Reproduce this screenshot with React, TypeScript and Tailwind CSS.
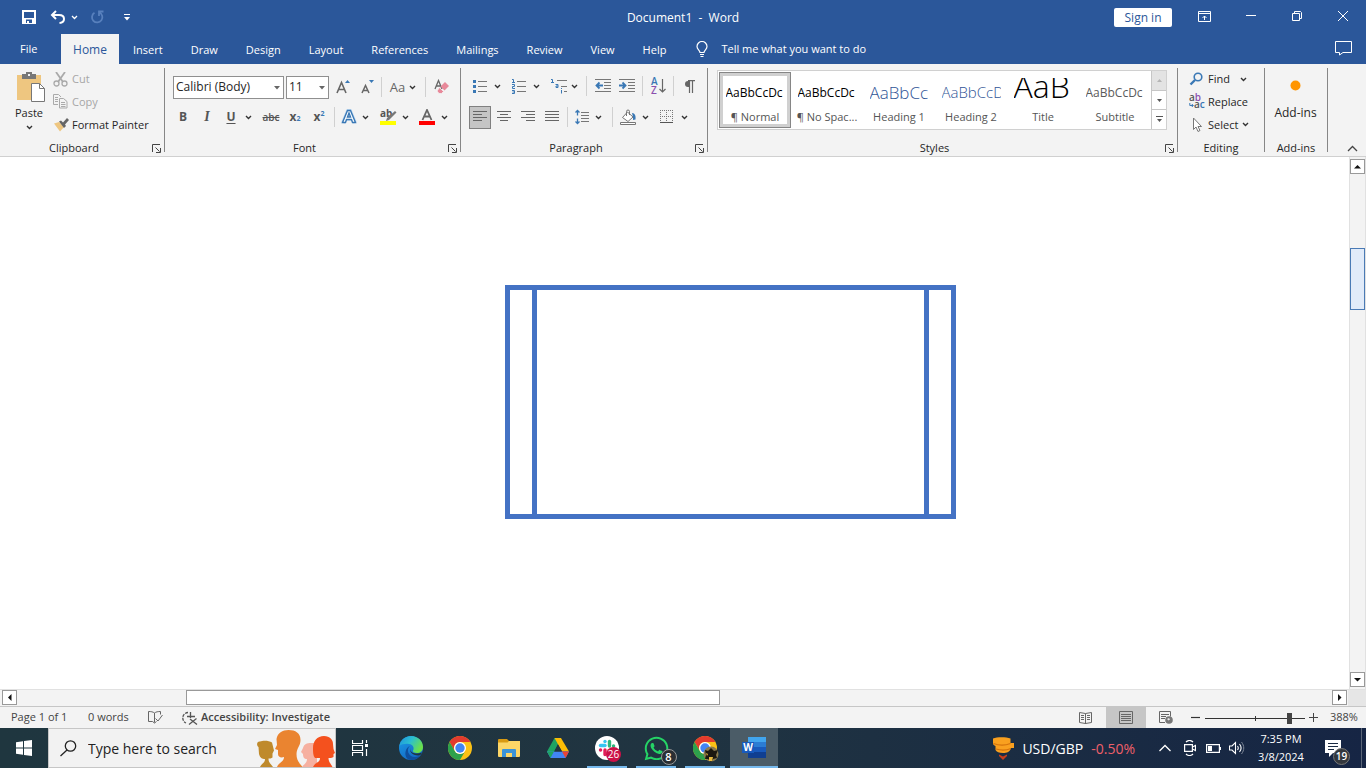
import type { ReactNode } from 'react';
import { FaWhatsapp } from 'react-icons/fa';

const tabs = ['Insert', 'Draw', 'Design', 'Layout', 'References', 'Mailings', 'Review', 'View', 'Help'];

const styleItems = [
  { label: '¶ Normal', sample: 'AaBbCcDc', look: 'text-[12px] leading-6 text-black pt-[3px]', active: true },
  { label: '¶ No Spac...', sample: 'AaBbCcDc', look: 'text-[12px] leading-6 text-black pt-[3px]' },
  { label: 'Heading 1', sample: 'AaBbCc', look: 'text-[17px] leading-6 font-light text-[#2f5496] pt-[3px]' },
  { label: 'Heading 2', sample: 'AaBbCcD', look: 'text-[15px] leading-6 font-light text-[#2f5496] pt-[2px]' },
  { label: 'Title', sample: 'AaB', look: 'text-[32px] leading-4 font-light text-black' },
  { label: 'Subtitle', sample: 'AaBbCcDc', look: 'text-[12px] leading-6 text-[#5a5a5a] pt-[3px]' },
];

interface IconProps {
  w?: number;
  h?: number;
  children: ReactNode;
}

function Icon({ w = 16, h = 16, children }: IconProps) {
  return (
    <svg width={w} height={h} viewBox={`0 0 ${w} ${h}`} fill="none" className="shrink-0" aria-hidden="true">
      {children}
    </svg>
  );
}

function Chevron() {
  return (
    <Icon w={7} h={5}>
      <path d="M1 1l2.5 2.5L6 1" stroke="#333" strokeWidth="1.4" />
    </Icon>
  );
}

function Tool({ label, className = 'w-6', children }: { label: string; className?: string; children: ReactNode }) {
  return (
    <button type="button" aria-label={label} className={`flex h-6 shrink-0 items-center justify-center ${className}`}>
      {children}
    </button>
  );
}

function More({ label }: { label: string }) {
  return (
    <Tool label={`${label} options`} className="w-[10px]">
      <Chevron />
    </Tool>
  );
}

function Sep({ className = 'mx-1' }: { className?: string }) {
  return <span className={`h-5 w-px shrink-0 bg-[#d0d0d0] ${className}`} />;
}

interface GroupProps {
  title: string;
  className: string;
  launcher?: boolean;
  children: ReactNode;
}

function Group({ title, className, launcher = true, children }: GroupProps) {
  return (
    <section aria-label={title} className={`flex shrink-0 flex-col border-r border-[#868686] ${className}`}>
      <div className="flex-1">{children}</div>
      <div className="flex h-2 items-center">
        <span className="flex-1 whitespace-nowrap text-center">{title}</span>
        {launcher && (
          <button type="button" aria-label={`${title} settings`} className="flex w-4 shrink-0 justify-center">
            <Icon w={9} h={9}>
              <path d="M.5 8V.5H8M3.500 3.500l4 4M8.500 4v4.500H4" stroke="#444" />
            </Icon>
          </button>
        )}
      </div>
    </section>
  );
}

function Combo({ label, value, className }: { label: string; value: string; className: string }) {
  return (
    <span className={`relative h-[23px] ${className}`}>
      <select
        aria-label={label}
        defaultValue={value}
        className="h-full w-full appearance-none border border-[#8f8f8f] bg-white px-[2px] text-[12px] leading-4 text-[#262626]"
      >
        <option>{value}</option>
      </select>
      <span className="pointer-events-none absolute right-1 top-[10px]">
        <Icon w={6} h={4}>
          <path d="M0 0h6L3 3.500z" fill="#666" />
        </Icon>
      </span>
    </span>
  );
}

function TitleBar() {
  return (
    <header className="flex h-[34px] items-center bg-[#2b579a] text-[12px] text-white">
      <div className="flex flex-1 items-center">
        <button type="button" aria-label="Save" className="ml-[22px]">
          <Icon w={14} h={14}>
            <path d="M1 1h12v12H1z" stroke="#fff" strokeWidth="2" />
            <path d="M1 8h12v5H1z" fill="#fff" />
            <path d="M4 9.500h6V13H7v-2H5v2H4z" fill="#2b579a" />
          </Icon>
        </button>
        <button type="button" aria-label="Undo" className="ml-[14px]">
          <Icon w={16} h={14}>
            <path d="M6 1L2 5l4 4M2.500 5H9c3.500 0 5 1.800 5 4 0 2.400-1.500 3.700-4.500 4" stroke="#fff" strokeWidth="2" />
          </Icon>
        </button>
        <button type="button" aria-label="Undo options" className="ml-[5px]">
          <Icon w={7} h={5}>
            <path d="M1 1l2.500 2.500L6 1" stroke="#fff" strokeWidth="1.300" />
          </Icon>
        </button>
        <button type="button" aria-label="Repeat" className="ml-[12px]">
          <Icon w={14} h={14}>
            <path d="M13.500 1.500H9V6M9.300 2.500A5.200 5.200 0 1 1 4.500 2.800" stroke="#5880bd" strokeWidth="1.800" />
          </Icon>
        </button>
        <button type="button" aria-label="Customize quick access toolbar" className="ml-[20px]">
          <Icon w={6} h={7}>
            <path d="M0 .5h6" stroke="#fff" />
            <path d="M0 3h6L3 6.500z" fill="#fff" />
          </Icon>
        </button>
      </div>
      <h1 className="whitespace-pre pt-px text-[12px]">Document1  -  Word</h1>
      <div className="flex flex-1 items-center justify-end">
        <button type="button" className="h-[19px] w-[58px] rounded-xs bg-white pt-px text-[12px] leading-4 text-[#2b579a]">
          Sign in
        </button>
        <button type="button" aria-label="Ribbon display options" className="ml-[26px]">
          <Icon w={13} h={13}>
            <path d="M.5.5h12v10H.5zM.5 2.500h12M6.500 9V5M4.500 7l2-2 2 2" stroke="#fff" />
          </Icon>
        </button>
        <button type="button" aria-label="Minimize" className="ml-[35px]">
          <Icon w={10} h={10}>
            <path d="M0 3.500h10" stroke="#fff" />
          </Icon>
        </button>
        <button type="button" aria-label="Restore" className="ml-[36px]">
          <Icon w={10} h={13}>
            <path d="M.5 2.500h7v7h-7zM2.500 2V.5h6l1 1v6H8" stroke="#fff" />
          </Icon>
        </button>
        <button type="button" aria-label="Close" className="ml-[36px] mr-[18px]">
          <Icon w={10} h={13}>
            <path d="M0 0l10 10M10 0L0 10" stroke="#fff" />
          </Icon>
        </button>
      </div>
    </header>
  );
}

function TabBar() {
  return (
    <nav className="flex h-[30px] items-center bg-[#2b579a] pr-[14px] text-[11px] text-white">
      <button type="button" className="ml-[20px] w-[41px] text-left">File</button>
      <button type="button" className="h-[30px] w-[58px] bg-[#f3f3f3] pt-px text-[12px] text-[#2b579a]">Home</button>
      <div className="flex items-center gap-7 pl-[14px] pt-[2px]">
        {tabs.map((tab) => (
          <button key={tab} type="button">{tab}</button>
        ))}
      </div>
      <button type="button" className="ml-[30px] flex items-center gap-[13px]">
        <Icon w={12} h={17}>
          <path d="M4 11.500C4 9.500 1 8.500 1 5.500a5 5 0 0 1 10 0c0 3-3 4-3 6zM4 13.500h4M4.500 15.500h3" stroke="#fff" strokeWidth="1.200" />
        </Icon>
        Tell me what you want to do
      </button>
      <button type="button" aria-label="Comments" className="ml-auto">
        <Icon w={17} h={17}>
          <path d="M.5.5h16v11H8L4.500 14v-2.500h-4z" stroke="#fff" />
        </Icon>
      </button>
    </nav>
  );
}

function ClipboardGroup() {
  return (
    <Group title="Clipboard" className="w-[165px]">
      <div className="flex pl-[14px]">
        <button type="button" className="flex w-[30px] flex-col items-center pt-[4px]">
          <span className="pl-[4px]">
            <Icon w={28} h={31}>
              <path d="M0 3h24v25H0z" fill="#eec680" />
              <path d="M5 2h4V0h6v2h4v5H5z" fill="#777" />
              <path d="M11 2h2v2h-2z" fill="#f3f3f3" />
              <path d="M14.500 11.500h8l5 5v13h-13z" fill="#fff" stroke="#777" />
              <path d="M22.500 11.500v5h5" stroke="#777" />
            </Icon>
          </span>
          <span className="pb-[4px] pt-[2px] leading-4">Paste</span>
          <Chevron />
        </button>
        <div className="flex flex-col pl-[9px]">
          <button type="button" className="flex h-[22px] items-center gap-[4px] text-[#a6a6a6]">
            <Icon w={15} h={15}>
              <path d="M3 0l7 10M12 0L5 10" stroke="#aaa" strokeWidth="1.800" />
              <circle cx="3.500" cy="11.500" r="2.500" stroke="#aaa" strokeWidth="1.300" />
              <circle cx="11.500" cy="11.500" r="2.500" stroke="#aaa" strokeWidth="1.300" />
            </Icon>
            Cut
          </button>
          <button type="button" className="flex h-[23px] items-center gap-[4px] text-[#a6a6a6]">
            <Icon w={15} h={15}>
              <path d="M5 10.500H.5V.5h5L8 3M2 3.500h3M2 5.500h3M2 7.500h3" stroke="#aaa" />
              <path d="M6.500 4.500h4l3.500 3v6.500H6.500zM8 8.500h4M8 10.500h4.500M8 12.500h4.500" stroke="#aaa" />
            </Icon>
            Copy
          </button>
          <button type="button" className="flex h-[23px] items-center gap-[3px] whitespace-nowrap">
            <Icon w={16} h={14}>
              <path d="M1 5.500l5-1.500 5 5-4 4.500z" fill="#eec680" />
              <path d="M6 3.500l2-1 2 2L14 0l2 2-4 4.500 1 1.500-2 2z" fill="#666" />
            </Icon>
            Format Painter
          </button>
        </div>
      </div>
    </Group>
  );
}

function FontGroup() {
  return (
    <Group title="Font" className="w-[296px]">
      <div className="mt-[7px] flex h-6 items-center pl-[8px]">
        <Combo label="Font" value="Calibri (Body)" className="mr-[2px] w-[111px]" />
        <Combo label="Font size" value="11" className="mr-[2px] w-[43px]" />
        <Tool label="Grow font">
          <Icon w={14} h={16}>
            <path d="M1 14L5.500 3.500 10 14M2.700 10.500h5.600" stroke="#666" strokeWidth="1.600" />
            <path d="M9 4l2.500-3L14 4z" fill="#3a78b5" />
          </Icon>
        </Tool>
        <Tool label="Shrink font">
          <Icon w={14} h={16}>
            <path d="M2 14L5.500 6.500 9 14M3.300 11.500h4.400" stroke="#666" strokeWidth="1.500" />
            <path d="M9 1h5l-2.500 3z" fill="#3a78b5" />
          </Icon>
        </Tool>
        <Sep className="ml-[2px] mr-[3px]" />
        <Tool label="Change case" className="w-[36px] gap-[4px] text-[13px] text-[#666]">
          Aa
          <Chevron />
        </Tool>
        <Sep className="ml-[4px] mr-[4px]" />
        <Tool label="Clear formatting">
          <Icon w={16} h={16}>
            <path d="M1 10L4.500 1.500 8 10M2.500 7h4" stroke="#666" strokeWidth="1.300" />
            <path d="M11 3l4 4-4.500 4.500-4-4z" fill="#e8899a" />
            <path d="M5.500 8.500l4 4-2 2H5l-2-2.500z" fill="#e8899a" stroke="#f3f3f3" strokeWidth=".8" />
          </Icon>
        </Tool>
      </div>
      <div className="mt-[6px] flex h-6 items-center pl-[6px] text-[#555]">
        <Tool label="Bold"><b className="text-[12px]">B</b></Tool>
        <Tool label="Italic"><i className="font-['Liberation_Serif',serif] text-[14px] font-bold">I</i></Tool>
        <Tool label="Underline"><u className="text-[12px] font-bold underline-offset-2">U</u></Tool>
        <More label="Underline" />
        <Tool label="Strikethrough" className="ml-[6px] w-6"><s className="text-[10px] font-semibold">abc</s></Tool>
        <Tool label="Subscript">
          <b className="text-[12px]">x</b><span className="self-end pb-[2px] text-[7px] font-bold text-[#3a78b5]">2</span>
        </Tool>
        <Tool label="Superscript">
          <b className="text-[12px]">x</b><span className="self-start pt-[1px] text-[7px] font-bold text-[#3a78b5]">2</span>
        </Tool>
        <Sep className="ml-[3px] mr-[3px]" />
        <Tool label="Text effects" className="w-[22px]">
          <Icon w={16} h={16}>
            <path d="M2 14L7 2h2l5 12M5 10h6" stroke="#c3dcf3" strokeWidth="4" />
            <path d="M1.500 13.500L6.500 1.500h3l5 12h-3l-1-3h-5l-1 3zM6.500 8h3L8 4z" fill="#fff" stroke="#3a78b5" strokeWidth="1.400" />
          </Icon>
        </Tool>
        <More label="Text effects" />
        <Tool label="Highlight color" className="ml-[6px] w-6">
          <svg width="17" height="16" viewBox="0 0 17 16" className="overflow-visible font-['Open_Sans',sans-serif]" aria-hidden="true">
            <text x="0" y="8" fontSize="10" fontWeight="700" fill="#555">ab</text>
            <path d="M15 2l1.500 1.500L9 11l-3 1 1-3z" fill="#777" />
            <path d="M0 12h16v4H0z" fill="#ff0" />
          </svg>
        </Tool>
        <More label="Highlight color" />
        <Tool label="Font color" className="ml-[5px] w-6">
          <Icon>
            <path d="M3.500 11L8 1l4.500 10M5.200 7.500h5.600" stroke="#666" strokeWidth="1.800" />
            <path d="M0 12h16v4H0z" fill="red" />
          </Icon>
        </Tool>
        <More label="Font color" />
      </div>
    </Group>
  );
}

function ParagraphGroup() {
  return (
    <Group title="Paragraph" className="w-[247px]">
      <div className="mt-[6px] flex h-6 items-center pl-[7px]">
        <Tool label="Bullets">
          <Icon>
            <path d="M6 3.500h9M6 8.500h9M6 13.500h9" stroke="#777" />
            <path d="M1 2h3v3H1zM1 7h3v3H1zM1 12h3v3H1z" fill="#3a78b5" />
          </Icon>
        </Tool>
        <More label="Bullets" />
        <Tool label="Numbering" className="ml-[5px] w-6">
          <Icon>
            <path d="M6 3.500h9M6 8.500h9M6 13.500h9" stroke="#777" />
            <path d="M1 1.500h1.500v3M1 4.500h3M1 6.500h2.500v2H1.500v2H4M1 12.500h2.500v3H1M1.500 14h2" stroke="#3a78b5" />
          </Icon>
        </Tool>
        <More label="Numbering" />
        <Tool label="Multilevel list" className="ml-[8px] w-5">
          <Icon w={17} h={16}>
            <path d="M6 2.500h10M10 8.500h6M13 13.500h3" stroke="#777" />
            <path d="M0 1.500h1.500v3M0 4.500h3M4.500 6.500H7v3H5V8h2M10.500 10v1M10.500 12v3.500" stroke="#3a78b5" />
          </Icon>
        </Tool>
        <More label="Multilevel list" />
        <Sep className="ml-[7px] mr-[4px]" />
        <Tool label="Decrease indent">
          <Icon>
            <path d="M0 1.500h16M9 4.500h7M9 7.500h7M9 10.500h7M0 13.500h16" stroke="#777" />
            <path d="M8 7.500H2M4.500 4.500l-3 3 3 3" stroke="#3a78b5" strokeWidth="1.800" />
          </Icon>
        </Tool>
        <Tool label="Increase indent">
          <Icon>
            <path d="M0 1.500h16M9 4.500h7M9 7.500h7M9 10.500h7M0 13.500h16" stroke="#777" />
            <path d="M0 7.500h6M3.500 4.500l3 3-3 3" stroke="#3a78b5" strokeWidth="1.800" />
          </Icon>
        </Tool>
        <Sep className="ml-[3px] mr-[3px]" />
        <Tool label="Sort">
          <svg width="15" height="18" viewBox="0 0 15 18" className="overflow-visible font-['Open_Sans',sans-serif]" aria-hidden="true">
            <text x="0" y="8" fontSize="10" fontWeight="600" fill="#3a78b5">A</text>
            <text x="0" y="17" fontSize="10" fontWeight="600" fill="#8b4fae">Z</text>
            <path d="M11.500 2v13M8.500 12l3 3 3-3" stroke="#666" fill="none" strokeWidth="1.200" />
          </svg>
        </Tool>
        <Sep className="ml-[3px] mr-[3px]" />
        <Tool label="Show marks">
          <Icon w={11} h={13}>
            <path d="M4 1a3 3 0 0 0 0 6h1V1z" fill="#666" />
            <path d="M4 .6h7M5.500 1v12M8.500 1v12" stroke="#666" strokeWidth="1.200" />
          </Icon>
        </Tool>
      </div>
      <div className="mt-[7px] flex h-6 items-center pl-[8px]">
        <button type="button" aria-label="Align left" className="flex h-[23px] w-[22px] items-center justify-center border border-[#808080] bg-[#c5c5c5]">
          <Icon w={14} h={12}>
            <path d="M0 .5h14M0 3.500h9M0 6.500h14M0 9.500h9" stroke="#666" />
          </Icon>
        </button>
        <Tool label="Center" className="ml-px w-6">
          <Icon w={14} h={12}>
            <path d="M0 .5h14M3 3.500h8M0 6.500h14M3 9.500h8" stroke="#666" />
          </Icon>
        </Tool>
        <Tool label="Align right">
          <Icon w={14} h={12}>
            <path d="M0 .5h14M5 3.500h9M0 6.500h14M5 9.500h9" stroke="#666" />
          </Icon>
        </Tool>
        <Tool label="Justify">
          <Icon w={14} h={12}>
            <path d="M0 .5h14M0 3.500h14M0 6.500h14M0 9.500h14" stroke="#666" />
          </Icon>
        </Tool>
        <Sep className="ml-[3px] mr-[3px]" />
        <Tool label="Line spacing" className="w-[22px]">
          <Icon w={14} h={16}>
            <path d="M6 3.500h8M6 6.500h8M6 9.500h8M6 12.500h8" stroke="#777" />
            <path d="M2.500 1v5.500M2.500 9.500V15M.5 3.500l2-2 2 2M.5 12.500l2 2 2-2" stroke="#3a78b5" strokeWidth="1.300" />
          </Icon>
        </Tool>
        <More label="Line spacing" />
        <Sep className="ml-[9px] mr-[3px]" />
        <Tool label="Shading">
          <Icon>
            <path d="M2.500 8.500L7.500 3l5.500 5-5 4.500z" fill="#fff" stroke="#777" />
            <path d="M6.500 7V2.500a1.500 1.500 0 0 1 3 0V6" stroke="#777" />
            <path d="M12 4c3 0 4 3 3.500 6.500L13 11V8z" fill="#3a78b5" />
            <path d="M.5 13.500h15v2H.5z" fill="#fff" stroke="#777" />
          </Icon>
        </Tool>
        <More label="Shading" />
        <Tool label="Borders" className="ml-[5px] w-6">
          <Icon w={14} h={14}>
            <path d="M.5 0v13M6.500 0v13M12.500 0v13M0 .5h13M0 6.500h13" stroke="#777" strokeDasharray="1 1" />
            <path d="M0 12.500h13" stroke="#555" />
          </Icon>
        </Tool>
        <More label="Borders" />
      </div>
    </Group>
  );
}

function StylesGroup() {
  return (
    <Group title="Styles" className="min-w-[470px] flex-1">
      <div className="ml-[9px] mr-[10px] mt-[2px] flex h-[60px] border border-[#d0d0d0] bg-white">
        <div className="flex flex-1 items-center pl-px">
          {styleItems.map((item) => (
            <button
              key={item.label}
              type="button"
              className={`flex h-[56px] w-[72px] flex-col items-center border pt-[5px] ${
                item.active ? 'border-[#868686] shadow-[inset_0_0_0_3px_#d0d0d0]' : 'border-transparent'
              }`}
            >
              <span className={`flex h-[27px] w-[59px] shrink-0 items-start overflow-hidden ${item.look}`}>
                {item.sample}
              </span>
              <span className="mt-[4px] whitespace-nowrap text-[11px] leading-4 text-[#555]">{item.label}</span>
            </button>
          ))}
        </div>
        <div className="flex w-[15px] flex-col divide-y divide-[#c6c6c6] border-l border-[#c6c6c6]">
          <button type="button" aria-label="Previous styles" className="flex flex-1 items-center justify-center bg-[#e3e3e3]">
            <Icon w={5} h={3}><path d="M0 3h5L2.500 0z" fill="#b5b5b5" /></Icon>
          </button>
          <button type="button" aria-label="Next styles" className="flex flex-1 items-center justify-center">
            <Icon w={5} h={3}><path d="M0 0h5L2.500 3z" fill="#555" /></Icon>
          </button>
          <button type="button" aria-label="All styles" className="flex flex-1 items-center justify-center">
            <Icon w={7} h={7}>
              <path d="M0 .5h7" stroke="#555" />
              <path d="M1 3h5L3.500 6z" fill="#555" />
            </Icon>
          </button>
        </div>
      </div>
    </Group>
  );
}

function EditingGroup() {
  return (
    <Group title="Editing" className="w-[87px]" launcher={false}>
      <div className="flex flex-col pl-[11px]">
        <button type="button" className="flex h-[22px] items-center">
          <Icon w={15} h={14}>
            <circle cx="9" cy="5" r="3.800" stroke="#3a78b5" strokeWidth="1.600" />
            <path d="M6 8l-4.500 4.500" stroke="#3a78b5" strokeWidth="2.400" />
          </Icon>
          <span className="ml-[4px] mr-[10px]">Find</span>
          <Chevron />
        </button>
        <button type="button" className="flex h-[23px] items-center gap-[3px]">
          <svg width="16" height="17" viewBox="0 0 16 17" className="overflow-visible font-['Open_Sans',sans-serif]" aria-hidden="true">
            <text x="0" y="8" fontSize="10" fontWeight="600" fill="#555">a<tspan fill="#8b4fae">b</tspan></text>
            <text x="5" y="15" fontSize="10" fontWeight="600" fill="#555">a<tspan fill="#3a78b5">c</tspan></text>
            <path d="M.8 10v2.500H4M2.800 11l1.500 1.500L2.800 14" stroke="#3a78b5" fill="none" />
          </svg>
          Replace
        </button>
        <button type="button" className="flex h-[23px] items-center">
          <Icon w={16} h={15}>
            <path d="M4.500 1v11.500l2.500-2.500 2 4.500 2-1-2-4h3.500z" fill="#fff" stroke="#777" />
          </Icon>
          <span className="ml-[3px] mr-[4px]">Select</span>
          <Chevron />
        </button>
      </div>
    </Group>
  );
}

function Ribbon() {
  return (
    <div className="flex h-[93px] border-b border-[#d0d0d0] bg-[#f3f3f3] pb-[4px] pt-[4px] text-[11px] leading-4 text-[#262626]">
      <ClipboardGroup />
      <FontGroup />
      <ParagraphGroup />
      <StylesGroup />
      <EditingGroup />
      <Group title="Add-ins" className="w-[63px]" launcher={false}>
        <button type="button" className="flex w-full flex-col items-center pr-px pt-[12px] text-[12px]">
          <Icon w={11} h={11}><circle cx="5.500" cy="5.500" r="5" fill="#ff9500" /></Icon>
          <span className="pt-[14px]">Add-ins</span>
        </button>
      </Group>
      <button type="button" aria-label="Collapse the ribbon" className="w-[38px] self-end pl-[19px]">
        <Icon w={11} h={7}><path d="M1 6l4.500-4.500L10 6" stroke="#444" strokeWidth="1.300" /></Icon>
      </button>
    </div>
  );
}

function ScrollButton({ label, d }: { label: string; d: string }) {
  return (
    <button type="button" aria-label={label} className="flex h-[15px] w-[15px] shrink-0 items-center justify-center border border-[#999] bg-white">
      <Icon w={7} h={7}><path d={d} fill="#111" /></Icon>
    </button>
  );
}

function Canvas() {
  return (
    <main className="flex flex-1 bg-white">
      <div className="flex flex-1 justify-center pl-[111px] pt-[128px]">
        {/* predefined process shape */}
        <div className="flex h-[234px] w-[451px] justify-between border-[5px] border-[#4472c4] px-[22px]">
          <div className="w-[5px] bg-[#4472c4]" />
          <div className="w-[5px] bg-[#4472c4]" />
        </div>
      </div>
      <div className="flex w-[17px] flex-col items-start border-x border-[#e1e1e1] bg-[#f3f3f3] pb-[2px] pt-[2px]">
        <ScrollButton label="Scroll up" d="M0 5.500h7L3.500 2z" />
        <div className="mt-[74px] h-[62px] w-[15px] border border-[#4a7ab5] bg-[#e1ebf9]" />
        <span className="flex-1" />
        <ScrollButton label="Scroll down" d="M0 2h7L3.500 5.500z" />
      </div>
    </main>
  );
}

function StatusBar() {
  return (
    <footer className="flex h-[22px] items-center border-t border-[#c6c6c6] bg-[#f3f3f3] pl-[11px] pr-[7px] text-[11px] text-[#444]">
      <span className="w-[77px]">Page 1 of 1</span>
      <span className="w-[60px]">0 words</span>
      <button type="button" aria-label="Proofing">
        <Icon w={15} h={13}>
          <path d="M6.500 11.500V2C5 .8 3 .5.500.5v10h4l2 1.500 2-1.500M6.500 2C8 .8 10 .5 12.500.5v3M7.500 7.500l2.500 2.500 4.500-6" stroke="#666" />
        </Icon>
      </button>
      <button type="button" className="ml-[19px] flex items-center gap-[3px] font-semibold">
        <Icon w={16} h={14}>
          <path d="M6 1.500A5.500 5.500 0 0 0 4 12" stroke="#555" strokeWidth="1.300" strokeDasharray="3 1" />
          <path d="M8.500 1v6M5 5.500h8M8 8l7 5.500M14.500 7.500L7 13.500" stroke="#555" strokeWidth="1.300" />
        </Icon>
        Accessibility: Investigate
      </button>
      <div className="ml-auto flex h-full items-center">
        <button type="button" aria-label="Read mode" className="mr-[14px]">
          <Icon w={13} h={12}>
            <path d="M6.500 12V1.500L.5.500v10l6 1M6.500 1.500l6-1v10l-6 1M2 3.500h3M2 5.500h3M2 7.500h3M8 3.500h3M8 5.500h3M8 7.500h3" stroke="#666" />
          </Icon>
        </button>
        <button type="button" aria-label="Print layout" className="flex h-full w-10 items-center justify-center bg-[#c6c6c6]">
          <Icon w={14} h={13}>
            <path d="M.5.5h13v12H.5zM2 3.500h10M2 5.500h10M2 7.500h10M2 9.500h10" stroke="#666" />
          </Icon>
        </button>
        <button type="button" aria-label="Web layout" className="ml-[13px]">
          <Icon w={14} h={13}>
            <path d="M6 11.500H.5V.5h11v5M2 3.500h8M2 5.500h5M2 7.500h4" stroke="#666" />
            <circle cx="10" cy="9" r="3.800" fill="#777" />
            <path d="M8 8l2-1 1 1.500-1.500 1z" fill="#e8e8e8" />
          </Icon>
        </button>
        <button type="button" aria-label="Zoom out" className="ml-[18px]">
          <Icon w={9} h={9}><path d="M0 4.500h9" stroke="#333" strokeWidth="1.200" /></Icon>
        </button>
        <Icon w={109} h={12}>
          <path d="M5 6.500h100M55.500 4v5" stroke="#333" />
          <path d="M87 1h5v11h-5z" fill="#444" />
        </Icon>
        <button type="button" aria-label="Zoom in" className="mr-[12px]">
          <Icon w={9} h={9}><path d="M0 4.500h9M4.500 0v9" stroke="#444" /></Icon>
        </button>
        <span className="w-[29px] whitespace-nowrap">388%</span>
      </div>
    </footer>
  );
}

function ChromeLogo() {
  return (
    <Icon w={24} h={24}>
      <circle cx="12" cy="12" r="12" fill="#fbc116" />
      <path d="M1.600 6A12 12 0 0 1 22.400 6H12a6 6 0 0 0-5.200 9z" fill="#e33b2e" />
      <path d="M1.600 6A12 12 0 0 0 12 24l5.200-9A6 6 0 0 1 6.800 15z" fill="#2da14c" />
      <circle cx="12" cy="12" r="6" fill="#fff" />
      <circle cx="12" cy="12" r="4.700" fill="#4285f4" />
    </Icon>
  );
}

function EdgeLogo() {
  return (
    <Icon w={24} h={24}>
      <defs>
        <linearGradient id="edgeTop" x1="0" y1="0" x2="1" y2="0.500">
          <stop offset="0" stopColor="#1e8fe0" />
          <stop offset="0.500" stopColor="#2bbfd0" />
          <stop offset="1" stopColor="#6be04a" />
        </linearGradient>
        <linearGradient id="edgeBase" x1="0" y1="0" x2="0.600" y2="1">
          <stop offset="0" stopColor="#1a9de8" />
          <stop offset="1" stopColor="#1468c4" />
        </linearGradient>
      </defs>
      <circle cx="12" cy="12" r="12" fill="url(#edgeBase)" />
      <path d="M.3 10C1.500 3.500 7 0 12 0c7 0 12 5 12 11 0 4-3 6-6 6-3 0-4.500-1-4-2.500 1.500-2 .500-6-4-6.500C6 7.500 2 8.500.3 10z" fill="url(#edgeTop)" />
      <path d="M11 10c-4 3-2 11 5 11 3 0 5-1 6.500-2.800C20.500 21 17 24 12.500 24 7 24 6 19 6.500 16 7 12.500 9 10.500 11 10z" fill="#0f4f9e" />
      <path d="M11.500 11c-1 2.500 0 5.500 4 6.300 2.500.5 5 .2 7.500-.8-.5 1.500-1.500 2.500-3 3C14 20 9.500 16 11.500 11z" fill="#20353f" />
    </Icon>
  );
}

function SlackLogo() {
  return (
    <Icon w={24} h={24}>
      <circle cx="12" cy="12" r="12" fill="#fff" />
      <g strokeWidth="3.400" strokeLinecap="round">
        <path d="M5.500 9.500h4.500" stroke="#36c5f0" />
        <path d="M10 5.500v.1" stroke="#36c5f0" />
        <path d="M14.500 5.500V10" stroke="#2eb67d" />
        <path d="M18.500 10h.1" stroke="#2eb67d" />
        <path d="M14 14.500h4.500" stroke="#ecb22e" />
        <path d="M10 14v4.500M5.500 14h.1" stroke="#e01e5a" />
      </g>
    </Icon>
  );
}

function TaskButton({ label, open, children }: { label: string; open?: boolean; children: ReactNode }) {
  return (
    <button
      type="button"
      aria-label={label}
      className={`flex h-full w-12 items-center justify-center ${open ? 'bg-[linear-gradient(#76b9ed,#76b9ed)] bg-[length:40px_2px] bg-bottom bg-no-repeat' : ''}`}
    >
      <span className="relative">{children}</span>
    </button>
  );
}

function Taskbar() {
  return (
    <div className="flex h-10 items-center bg-linear-to-r from-[#1f363f] via-[#203441] to-[#162544] text-white">
      <button type="button" aria-label="Start" className="flex h-full w-12 items-center justify-center">
        <Icon w={16} h={16}>
          <path d="M0 2.200L7 1.200v6.300H0zM8 1l8-1v7.500H8zM0 8.500h7v6.300l-7-1zM8 8.500h8V16l-8-1z" fill="#fff" />
        </Icon>
      </button>
      <div className="relative h-full w-[288px] border border-[#c6c6c6] bg-[#f2f2f2]">
        <span className="pointer-events-none absolute left-[11px] top-[11px]">
          <Icon w={17} h={17}>
            <circle cx="10.500" cy="6" r="5.200" stroke="#222" strokeWidth="1.300" />
            <path d="M7 10L.5 16" stroke="#222" strokeWidth="1.300" />
          </Icon>
        </span>
        <input
          aria-label="Search"
          placeholder="Type here to search"
          className="h-full w-full bg-transparent pl-[39px] text-[14px] text-[#222] outline-none placeholder:text-[#222]"
        />
        <span className="pointer-events-none absolute bottom-0 right-0">
          <Icon w={80} h={38}>
            <path d="M5 38c2-4 5-4 5-8-3 0-5-1-6-5l-.5-7C1 16 2 12 5 12.500c3-1 9-1 12 1l1 4 1 4-1.500 3v4c-1 1-3 1-4 1 0 4 2 5 4.500 8.500z" fill="#bf8a2c" />
            <path d="M22 38c2-5 7-5 7-10-3 1-6 0-6-3v-4l-3-1 2-4-.5-6c1-6 6-9 12-9 7 0 12 3 12 10 0 6-4 8-4 14 0 6 2 8 6 13z" fill="#ea8430" />
            <path d="M47 38c2-3 5-4 5-8-3 0-4-2-4-5l-2-2 2-4c1-4 4-5 8-5h6v24z" fill="#f6b0a0" />
            <path d="M58 38c2-5 7-4 7-9h-5c-2-2-2-6-2-10 0-7 4-12 11-12 6 0 9 4 9 8l.5 5L80 24l-1.500 1v3c-1 1-4 1-5 1 0 4 2 5 4 9z" fill="#f4511e" />
          </Icon>
        </span>
      </div>
      <TaskButton label="Task view">
        <Icon w={17} h={16}>
          <path d="M.5 0v3.500h10V0M.5 16v-3.500h10V16M.5 5.500h10v5H.5zM14.500 0v3M14.500 9v7" stroke="#fff" strokeWidth="1.200" />
          <path d="M13 4h3v3h-3z" fill="#fff" />
        </Icon>
      </TaskButton>
      <div className="ml-[3px] flex h-full gap-px">
        <TaskButton label="Edge"><EdgeLogo /></TaskButton>
        <TaskButton label="Chrome"><ChromeLogo /></TaskButton>
        <TaskButton label="File Explorer">
          <Icon w={22} h={18}>
            <path d="M0 1a1 1 0 0 1 1-1h8l2 2h10v15H1a1 1 0 0 1-1-1z" fill="#d99a12" />
            <path d="M0 3.500h9.500L11 2h11v15a1 1 0 0 1-1 1H1a1 1 0 0 1-1-1z" fill="#fcd667" />
            <path d="M4 18v-7a1 1 0 0 1 1-1h12a1 1 0 0 1 1 1v7h-4v-4H8v4z" fill="#3a93d8" />
          </Icon>
        </TaskButton>
        <TaskButton label="Google Drive">
          <Icon w={22} h={20}>
            <path d="M7.500 0H14l-3 6-6.500 14L0 13.500z" fill="#1ea362" />
            <path d="M7.500 0H14l8 13.500h-7z" fill="#fbbc05" />
            <path d="M0 13.500h22L18.500 20h-15z" fill="#4285f4" />
            <path d="M15 13.500h7L18.500 20z" fill="#ea4335" />
            <path d="M0 13.500h7L3.500 20z" fill="#1ea362" />
            <path d="M11 6.500l4 7H7z" fill="#20353f" />
          </Icon>
        </TaskButton>
        <TaskButton label="Slack" open>
          <SlackLogo />
          <span className="absolute -bottom-[2px] -right-[2px] h-[15px] w-[15px] rounded-full bg-[#cc1048] text-center text-[10px] leading-[15px]">26</span>
        </TaskButton>
        <TaskButton label="WhatsApp" open>
          <FaWhatsapp size={27} color="#25d366" />
          <span className="absolute -bottom-[3px] -right-[7px] h-4 w-4 rounded-full border border-[#999] bg-[#2b2f33] text-center text-[11px] font-semibold leading-[14px]">8</span>
        </TaskButton>
        <TaskButton label="Chrome profile" open>
          <ChromeLogo />
          <span className="absolute -bottom-[2px] -right-[2px]">
            <Icon w={16} h={16}>
              <circle cx="8" cy="8" r="7.500" fill="#8a7a4e" />
              <path d="M2 4l3 1 3-3 3 3 4-1-2 5 1 3-4 1-2 3-3-3-3 0 1-4z" fill="#1c1810" />
              <path d="M6 11h4l-1 4H6zM3 7l2 1-1 2z" fill="#e8b93c" />
            </Icon>
          </span>
        </TaskButton>
        <button type="button" aria-label="Word" className="flex h-full w-12 items-center justify-center border-b-2 border-[#76b9ed] bg-[#4b5c67]">
          <svg width="24" height="22" viewBox="0 0 24 22" className="overflow-visible font-['Open_Sans',sans-serif]" aria-hidden="true">
            <path d="M6 1h18v5H6z" fill="#41a5ee" />
            <path d="M6 6h18v5H6z" fill="#2b7cd3" />
            <path d="M6 11h18v5H6z" fill="#185abd" />
            <path d="M6 16h18v6H6z" fill="#103f91" />
            <path d="M0 6h12v11H0z" fill="#185abd" />
            <text x="6" y="15" fontSize="10" fontWeight="700" fill="#fff" textAnchor="middle">W</text>
          </svg>
        </button>
      </div>
      <div className="ml-auto flex h-full items-center">
        <button type="button" className="flex items-center whitespace-nowrap text-[14px]">
          <Icon w={22} h={23}>
            <path d="M1 1.500C5-.3 14-.3 18.500 1.500V6H22v5h-3c-1 4-4 5-8 5-4 0-6.500-1-7.500-3V9C1 8 1 7 1 6z" fill="#f9a01f" />
            <path d="M1.500 6.500c5 2 12 2 17 0M4 12c5 1.500 10 1.500 15-.5" stroke="#d4720c" strokeWidth="1.200" />
            <path d="M7 17.500l4 2 4-2v1.500l-4 4-4-4z" fill="#c83e1a" />
          </Icon>
          <span className="ml-[8px]">USD/GBP</span>
          <span className="ml-[8px] text-[#f0606a]">-0.50%</span>
        </button>
        <button type="button" aria-label="Hidden icons" className="ml-[24px]">
          <Icon w={12} h={8}><path d="M.5 7L6 1.500 11.500 7" stroke="#fff" strokeWidth="1.300" /></Icon>
        </button>
        <button type="button" aria-label="Meet now" className="ml-[13px]">
          <Icon w={12} h={16}>
            <path d="M2 2c2-2 5-2 7 0M2 14c2 2 5 2 7 0M.6 4.600h7.800v6.800H.6zM8.500 7l3-1.500v5l-3-1.500" stroke="#fff" strokeWidth="1.200" />
          </Icon>
        </button>
        <button type="button" aria-label="Battery" className="ml-[10px]">
          <Icon w={15} h={9}>
            <path d="M.6.600h12.800v7.800H.6zM14.400 3v3" stroke="#fff" strokeWidth="1.200" />
            <path d="M2 2h4v5H2z" fill="#fff" />
          </Icon>
        </button>
        <button type="button" aria-label="Volume" className="ml-[8px]">
          <Icon w={16} h={14}>
            <path d="M.5 5h2.500L6.500 1.500v11L3 9H.5zM8.500 5c1 1.300 1 2.700 0 4M10.500 3c2 2.500 2 5.500 0 8" stroke="#fff" strokeWidth="1.100" />
            <path d="M12.500 1c3 4 3 8 0 12" stroke="#7d8797" />
          </Icon>
        </button>
        <button type="button" className="ml-[6px] mr-px w-[60px] whitespace-nowrap text-center text-[11px] leading-[18px]">
          <span className="block">7:35 PM</span>
          <span className="block">3/8/2024</span>
        </button>
        <button type="button" aria-label="Notifications" className="relative ml-[13px] mr-[19px]">
          <Icon w={17} h={17}>
            <path d="M0 0h16v13H8l-4 4v-4H0z" fill="#fff" />
            <path d="M3 3.500h10M3 6.500h10M3 9.500h6" stroke="#1a2a42" />
          </Icon>
          <span className="absolute -bottom-[8px] -right-[8px] h-[17px] w-[17px] rounded-full border border-[#777] bg-[#33373d] text-center text-[10px] font-semibold leading-[15px]">19</span>
        </button>
        <span className="mr-[4px] h-full w-px bg-[#5b6678]" />
      </div>
    </div>
  );
}

export default function App() {
  return (
    <div className="flex min-h-screen flex-col bg-white font-['Open_Sans',sans-serif] text-[12px]">
      <TitleBar />
      <TabBar />
      <Ribbon />
      <Canvas />
      <div className="flex h-[17px] items-start border-t border-[#e1e1e1] bg-[#f3f3f3] pl-[2px]">
        <ScrollButton label="Scroll left" d="M5.500 0v7L2 3.500z" />
        <div className="flex flex-1 pl-[169px]">
          <div className="h-[15px] w-[534px] border border-[#999] bg-white" />
        </div>
        <ScrollButton label="Scroll right" d="M2 0v7l3.500-3.500z" />
        <span className="ml-px h-full w-[18px] bg-[#e6e6e6]" />
      </div>
      <StatusBar />
      <Taskbar />
    </div>
  );
}
